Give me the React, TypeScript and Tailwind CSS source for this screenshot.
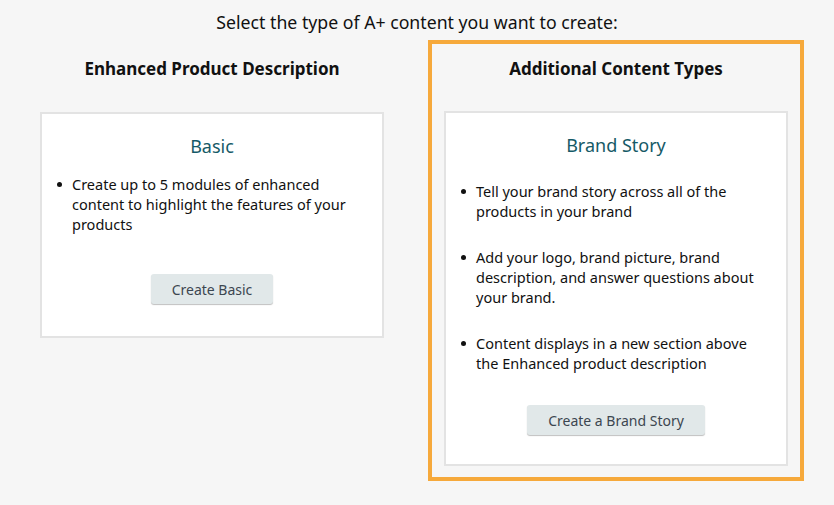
import React from "react";

const font = { fontFamily: '"Noto Sans", "Open Sans", Arial, sans-serif' };

function Card({
  title,
  items,
  button,
  titleGap,
  buttonGap,
  bottom,
}: {
  title: string;
  items: string[];
  button: string;
  titleGap: string;
  buttonGap: string;
  bottom: string;
}) {
  return (
    <div className={`bg-white border-2 border-[#e3e3e3] pt-[19px] ${bottom}`}>
      <h3 className="text-center text-[18px] leading-[26px] text-[#155a67]">{title}</h3>
      <ul className={`${titleGap} pl-[15px] pr-[20px] flex flex-col gap-[26px]`}>
        {items.map((t) => (
          <li key={t} className="flex text-[14.5px] leading-[20px] text-[#111]">
            <span className="w-[15px] shrink-0 pt-[8px]">
              <span className="block w-[5px] h-[5px] rounded-full bg-[#111]" />
            </span>
            <span>{t}</span>
          </li>
        ))}
      </ul>
      <div className={`flex justify-center ${buttonGap}`}>
        <button className="h-[30px] px-[21px] rounded-[3px] bg-[#e1e8e9] text-[14px] text-[#3c4650] shadow-[0_1px_1px_rgba(0,0,0,0.25)]">
          {button}
        </button>
      </div>
    </div>
  );
}

export default function App() {
  return (
    <div className="w-[834px] h-[505px] bg-[#f6f6f6] overflow-hidden" style={font}>
      <p className="text-center text-[17.7px] leading-[24px] pt-[10px] text-[#111]">
        Select the type of A+ content you want to create:
      </p>
      <div className="flex pl-[40px] gap-[44px] mt-[6px]">
        <div className="w-[344px]">
          <h2 className="text-center font-bold text-[17px] leading-[24px] text-[#111] pt-[17px]">
            Enhanced Product Description
          </h2>
          <div className="mt-[31px]">
            <Card
              title="Basic"
              items={["Create up to 5 modules of enhanced content to highlight the features of your products"]}
              button="Create Basic"
              titleGap="mt-[15px]"
              buttonGap="mt-[40px]"
              bottom="pb-[32px]"
            />
          </div>
        </div>
        <div className="w-[376px] h-[441px] border-4 border-[#f6a93b] px-[12px]">
          <h2 className="text-center font-bold text-[17px] leading-[24px] text-[#111] pt-[13px]">
            Additional Content Types
          </h2>
          <div className="mt-[30px]">
            <Card
              title="Brand Story"
              items={[
                "Tell your brand story across all of the products in your brand",
                "Add your logo, brand picture, brand description, and answer questions about your brand.",
                "Content displays in a new section above the Enhanced product description",
              ]}
              button="Create a Brand Story"
              titleGap="mt-[23px]"
              buttonGap="mt-[32px]"
              bottom="pb-[29px]"
            />
          </div>
        </div>
      </div>
    </div>
  );
}
